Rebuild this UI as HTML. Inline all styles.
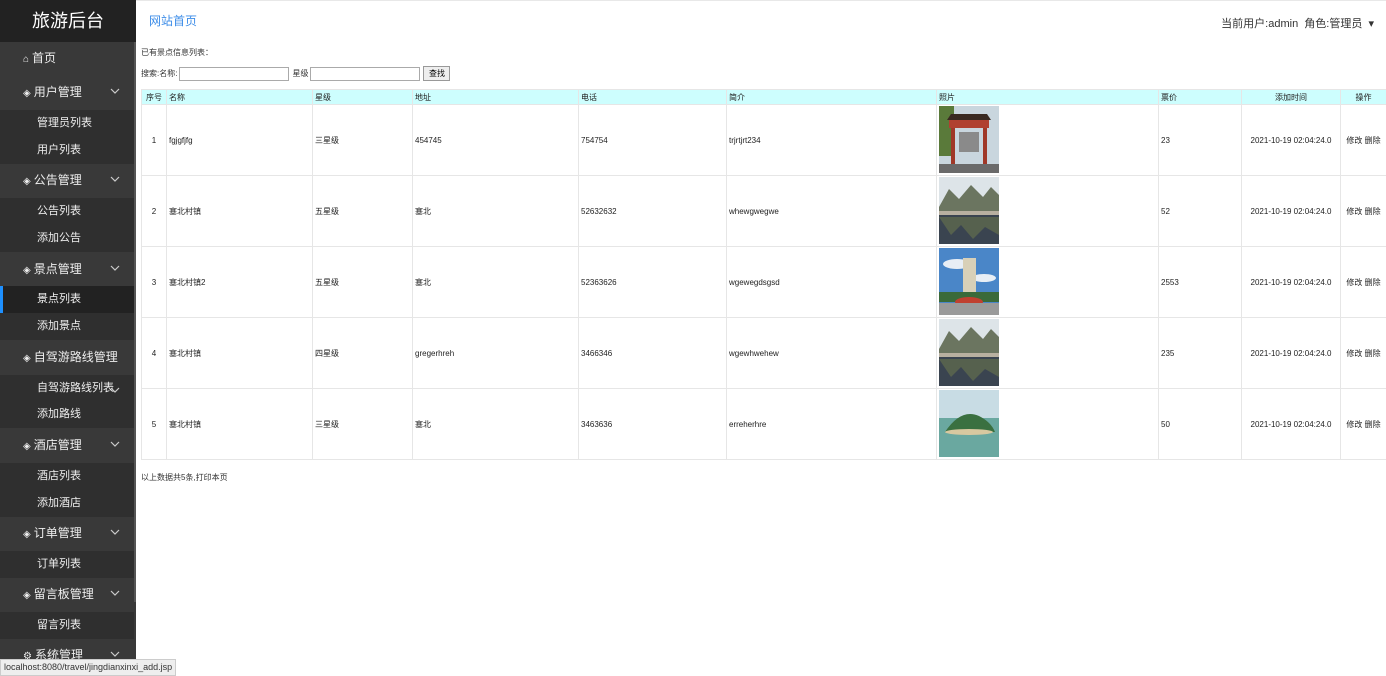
<!DOCTYPE html>
<html><head><meta charset="utf-8">
<style>
*{margin:0;padding:0;box-sizing:border-box}
body{width:1386px;height:676px;overflow:hidden;background:#fff;font-family:"Liberation Sans","Noto Sans CJK SC",sans-serif;position:relative}
#side{position:absolute;left:0;top:0;width:136px;height:676px;background:#393939;color:#fff;overflow:hidden}
#side .logo{height:42px;background:#222;font-size:18px;text-align:center;line-height:42px;color:#fff}
#sb{position:absolute;left:134px;top:42px;width:2px;height:560px;background:#555}
.it{position:absolute;left:0;width:134px;font-size:12px;color:#eee}
.top{height:30px;line-height:30px;padding-left:23px}
.sub{height:27px;line-height:27px;padding-left:37px;background:#2f2f2f;font-size:11px}
.act{background:#222}
.act:before{content:"";position:absolute;left:0;top:0;width:3px;height:100%;background:#1e90ff}
.chev{position:absolute;right:14px;top:11px;width:10px;height:7px}
.ic{font-size:10px;margin-right:3px}
#main{position:absolute;left:136px;top:0;right:0;height:676px;border-top:1px solid #e8e8e8}
.home{position:absolute;left:13px;top:11px;color:#3d8de8;font-size:12px}
.user{position:absolute;right:12px;top:14px;font-size:11px;color:#333}
.t1{position:absolute;left:5px;top:46px;font-size:8px;color:#333}
.srch{position:absolute;left:5px;top:65px;font-size:8px;color:#333;display:flex;align-items:center}
.srch input{width:110px;height:14px;border:1px solid #aaa;margin:0 3px 0 2px}
.srch button{height:15px;width:27px;font-size:8px;border:1px solid #999;background:#eee}
table{position:absolute;left:5px;top:88px;border-collapse:collapse;font-size:8px;color:#222;width:1245px;table-layout:fixed}
td,th{border:1px solid #e6e6e6;padding:0 2px;font-weight:normal;text-align:left}
th{background:#cdfefe;height:15px}
td{height:71px}
.c{text-align:center}
.foot{position:absolute;left:5px;top:471px;font-size:8px;color:#333}
#status{position:absolute;left:0;top:659px;height:17px;padding:0 3px;background:#eee;border:1px solid #ccc;font-size:9px;line-height:15px;color:#333}
</style></head><body>
<div id="side">
<div class="logo">旅游后台</div>
<div id="sb"></div>
<div class="it top" style="top:43px"><span class="ic">⌂</span>首页</div>
<div class="it top" style="top:77px"><span class="ic">◈</span>用户管理<svg class="chev" viewBox="0 0 10 7"><path d="M1 1 L5 5 L9 1" stroke="#ccc" fill="none" stroke-width="1.2"/></svg></div>
<div class="it sub" style="top:110px">管理员列表</div>
<div class="it sub" style="top:137px">用户列表</div>
<div class="it top" style="top:165px"><span class="ic">◈</span>公告管理<svg class="chev" viewBox="0 0 10 7"><path d="M1 1 L5 5 L9 1" stroke="#ccc" fill="none" stroke-width="1.2"/></svg></div>
<div class="it sub" style="top:198px">公告列表</div>
<div class="it sub" style="top:225px">添加公告</div>
<div class="it top" style="top:254px"><span class="ic">◈</span>景点管理<svg class="chev" viewBox="0 0 10 7"><path d="M1 1 L5 5 L9 1" stroke="#ccc" fill="none" stroke-width="1.2"/></svg></div>
<div class="it sub act" style="top:286px">景点列表</div>
<div class="it sub" style="top:313px">添加景点</div>
<div class="it top" style="top:342px"><span class="ic">◈</span>自驾游路线管理</div>
<div class="it sub" style="top:375px">自驾游路线列表<svg class="chev" style="right:14px;top:12px" viewBox="0 0 10 7"><path d="M1 1 L5 5 L9 1" stroke="#ccc" fill="none" stroke-width="1.2"/></svg></div>
<div class="it sub" style="top:401px">添加路线</div>
<div class="it top" style="top:430px"><span class="ic">◈</span>酒店管理<svg class="chev" viewBox="0 0 10 7"><path d="M1 1 L5 5 L9 1" stroke="#ccc" fill="none" stroke-width="1.2"/></svg></div>
<div class="it sub" style="top:463px">酒店列表</div>
<div class="it sub" style="top:490px">添加酒店</div>
<div class="it top" style="top:518px"><span class="ic">◈</span>订单管理<svg class="chev" viewBox="0 0 10 7"><path d="M1 1 L5 5 L9 1" stroke="#ccc" fill="none" stroke-width="1.2"/></svg></div>
<div class="it sub" style="top:551px">订单列表</div>
<div class="it top" style="top:579px"><span class="ic">◈</span>留言板管理<svg class="chev" viewBox="0 0 10 7"><path d="M1 1 L5 5 L9 1" stroke="#ccc" fill="none" stroke-width="1.2"/></svg></div>
<div class="it sub" style="top:612px">留言列表</div>
<div class="it top" style="top:640px"><span class="ic">⚙</span>系统管理<svg class="chev" viewBox="0 0 10 7"><path d="M1 1 L5 5 L9 1" stroke="#ccc" fill="none" stroke-width="1.2"/></svg></div>
</div>
<div id="main">
<div class="home">网站首页</div>
<div class="user">当前用户:admin &nbsp;角色:管理员 &nbsp;▾</div>
<div class="t1">已有景点信息列表：</div>
<div class="srch">搜索:名称: <input> 星级 <input> <button>查找</button></div>
<table>
<colgroup><col style="width:25px"><col style="width:146px"><col style="width:100px"><col style="width:166px"><col style="width:148px"><col style="width:210px"><col style="width:222px"><col style="width:83px"><col style="width:99px"><col style="width:46px"></colgroup>
<tr><th class="c">序号</th><th>名称</th><th>星级</th><th>地址</th><th>电话</th><th>简介</th><th>照片</th><th>票价</th><th class="c">添加时间</th><th class="c">操作</th></tr>
<tr><td class="c">1</td><td>fgjgfjfg</td><td>三星级</td><td>454745</td><td>754754</td><td>trjrtjrt234</td><td><svg width="60" height="67"><rect width="60" height="67" fill="#c9d6de"/><rect x="0" y="0" width="15" height="50" fill="#5a7a3a"/><path d="M8 14 L52 14 L48 8 L12 8Z" fill="#3a2a22"/><rect x="10" y="14" width="40" height="8" fill="#b04030"/><rect x="12" y="22" width="4" height="38" fill="#a03828"/><rect x="44" y="22" width="4" height="38" fill="#a03828"/><rect x="20" y="26" width="20" height="20" fill="#8a8a8a"/><rect x="0" y="58" width="60" height="9" fill="#6a6a6a"/></svg></td><td>23</td><td class="c">2021-10-19 02:04:24.0</td><td class="c">修改 删除</td></tr>
<tr><td class="c">2</td><td>塞北村镇</td><td>五星级</td><td>塞北</td><td>52632632</td><td>whewgwegwe</td><td><svg width="60" height="67"><rect width="60" height="33" fill="#dde4e8"/><path d="M0 30 L10 12 L20 22 L32 8 L44 20 L52 10 L60 18 L60 36 L0 36Z" fill="#6b7560"/><rect y="34" width="60" height="4" fill="#b8b0a0"/><rect y="38" width="60" height="29" fill="#3a4450"/><path d="M0 40 L12 58 L22 48 L34 62 L46 50 L60 58 L60 40Z" fill="#56614e"/></svg></td><td>52</td><td class="c">2021-10-19 02:04:24.0</td><td class="c">修改 删除</td></tr>
<tr><td class="c">3</td><td>塞北村镇2</td><td>五星级</td><td>塞北</td><td>52363626</td><td>wgewegdsgsd</td><td><svg width="60" height="67"><rect width="60" height="67" fill="#4a86c8"/><ellipse cx="18" cy="16" rx="14" ry="5" fill="#e8eef5"/><ellipse cx="45" cy="30" rx="12" ry="4" fill="#e8eef5"/><rect x="24" y="10" width="13" height="45" fill="#d8d0b8"/><rect x="0" y="44" width="60" height="10" fill="#3a6a3a"/><ellipse cx="30" cy="54" rx="14" ry="5" fill="#c04030"/><rect y="55" width="60" height="12" fill="#9a9a9a"/></svg></td><td>2553</td><td class="c">2021-10-19 02:04:24.0</td><td class="c">修改 删除</td></tr>
<tr><td class="c">4</td><td>塞北村镇</td><td>四星级</td><td>gregerhreh</td><td>3466346</td><td>wgewhwehew</td><td><svg width="60" height="67"><rect width="60" height="33" fill="#dde4e8"/><path d="M0 30 L10 12 L20 22 L32 8 L44 20 L52 10 L60 18 L60 36 L0 36Z" fill="#6b7560"/><rect y="34" width="60" height="4" fill="#b8b0a0"/><rect y="38" width="60" height="29" fill="#3a4450"/><path d="M0 40 L12 58 L22 48 L34 62 L46 50 L60 58 L60 40Z" fill="#56614e"/></svg></td><td>235</td><td class="c">2021-10-19 02:04:24.0</td><td class="c">修改 删除</td></tr>
<tr><td class="c">5</td><td>塞北村镇</td><td>三星级</td><td>塞北</td><td>3463636</td><td>erreherhre</td><td><svg width="60" height="67"><rect width="60" height="67" fill="#c8dce4"/><rect y="28" width="60" height="39" fill="#6aa8a0"/><path d="M6 42 Q22 18 40 26 Q52 32 56 42Z" fill="#3a7040"/><ellipse cx="30" cy="42" rx="24" ry="3" fill="#d8c8a0"/></svg></td><td>50</td><td class="c">2021-10-19 02:04:24.0</td><td class="c">修改 删除</td></tr>
</table>
<div class="foot">以上数据共5条,打印本页</div>
</div>
<div id="status">localhost:8080/travel/jingdianxinxi_add.jsp</div>
</body></html>
